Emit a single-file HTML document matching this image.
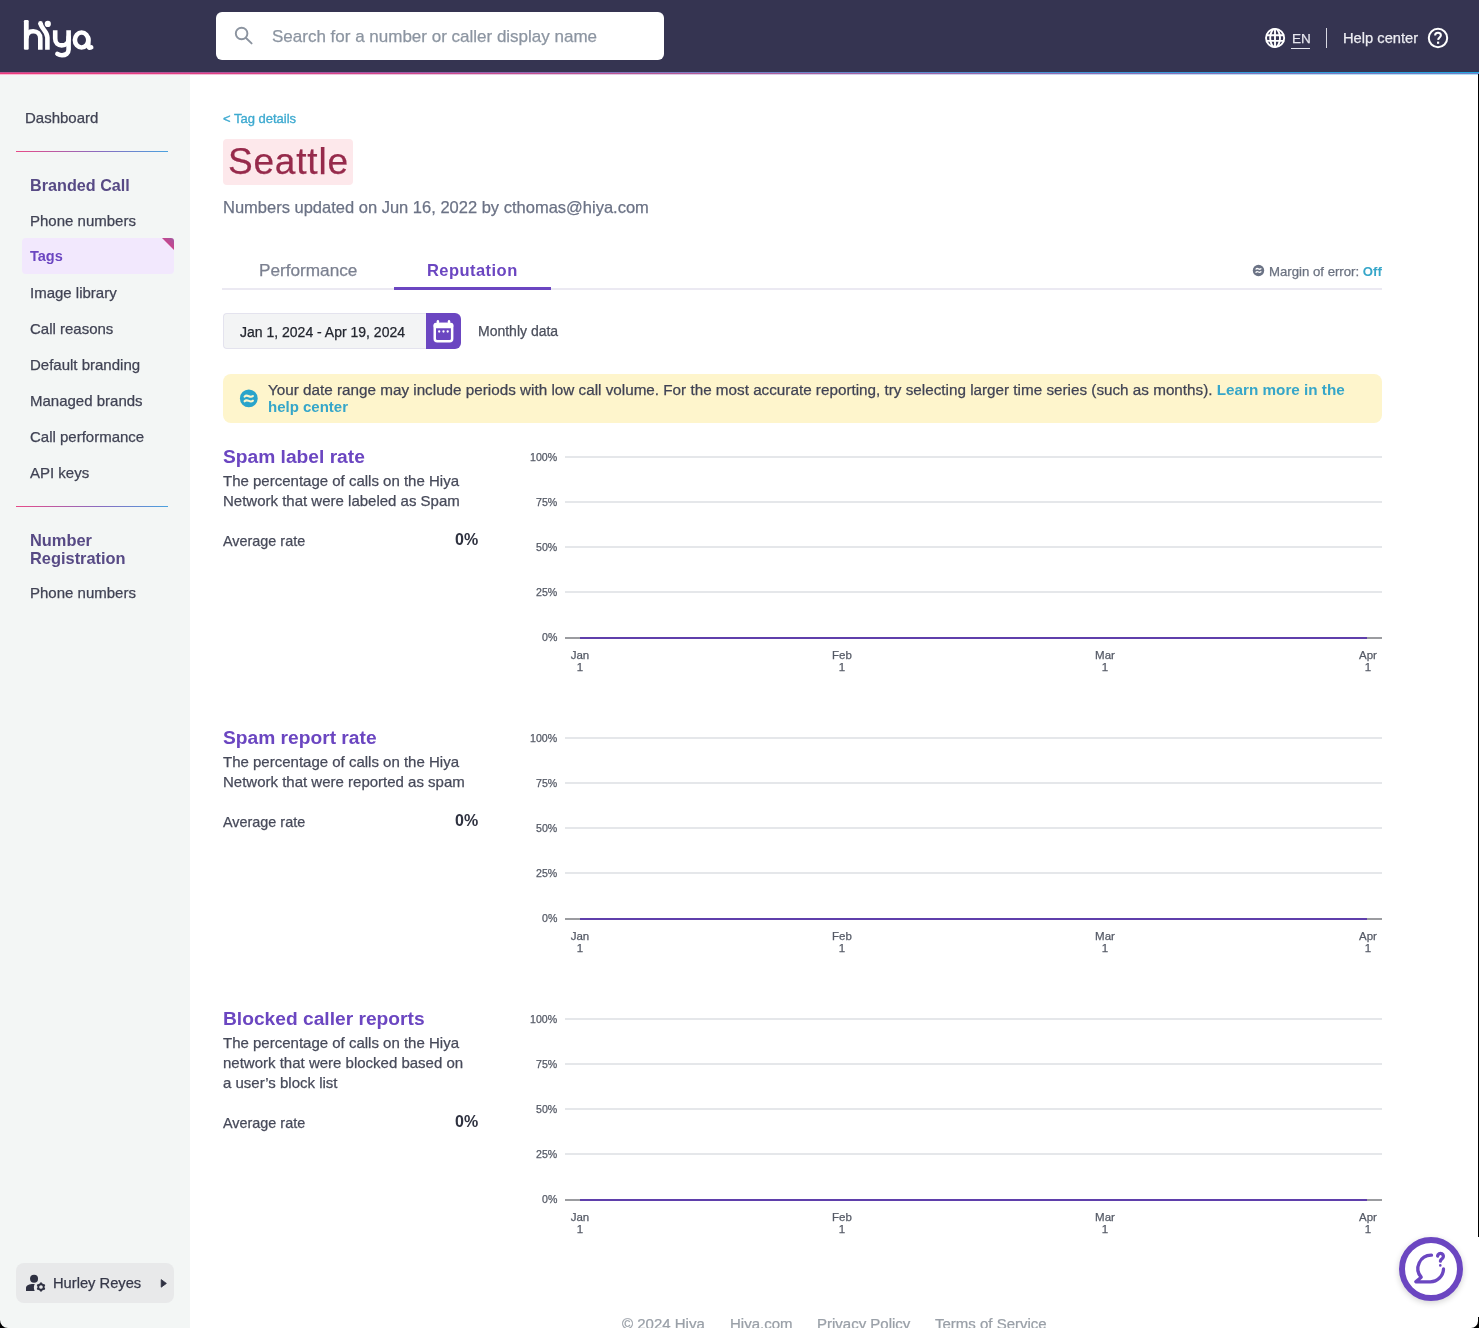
<!DOCTYPE html>
<html><head><meta charset="utf-8"><style>
html,body{margin:0;padding:0;width:1479px;height:1328px;overflow:hidden;background:#fff;}
body{position:relative;font-family:"Liberation Sans",sans-serif;}
.t{position:absolute;white-space:nowrap;will-change:transform;}
.r{position:absolute;display:block;}
</style></head><body>
<div class="r" style="left:0px;top:0px;width:1479px;height:72px;background:#353451;"></div>
<div class="r" style="left:0px;top:72px;width:1479px;height:1px;background:linear-gradient(90deg,#c4508e 0%,#a05aa6 25%,#7a7ec2 47%,#3b98d8 75%,#22a6e0 100%);"></div>
<div class="r" style="left:0px;top:73px;width:1479px;height:1px;background:linear-gradient(90deg,#f03a7c 0%,#d8458a 25%,#b55a98 47%,#8c6eb8 75%,#6f80c8 100%);"></div>
<div class="r" style="left:0px;top:74px;width:1479px;height:1px;background:linear-gradient(90deg,#f03a7c 0%,#c4508e 20%,#7a7ec2 60%,#22a6e0 100%);opacity:0.35;"></div>
<svg class="r" style="left:16px;top:12px" width="84" height="52" viewBox="16 12 84 52" fill="none" stroke="#fff" stroke-width="4.6" stroke-linejoin="round">
<rect x="23.9" y="20" width="4.8" height="29.8" rx="1.2" fill="#fff" stroke="none"/>
<path d="M26.4 38.5 C26.6 33.4 29.4 31.2 33.2 31.2 C37.4 31.2 40.3 33.8 40.3 38.6 V49.8"/>
<path d="M40.5 23.2 C40.9 28.8 47.4 31 47.4 37.5 V49.8" stroke-linecap="butt"/>
<circle cx="40.5" cy="23.2" r="2.3" fill="#fff" stroke="none"/>
<circle cx="47.8" cy="23.9" r="3.1" fill="#fff" stroke="none"/>
<path d="M55.2 30.2 V38.4 C55.2 43 58 45.4 61.8 45.4 C65.6 45.4 68.6 43 68.6 38.4 V30.2"/>
<path d="M68.6 37 V49.6 C68.6 53.4 65.6 55.2 62 55.2 C60.2 55.2 58.6 54.6 57.4 53.8" stroke-linecap="round"/>
<ellipse cx="81.6" cy="40" rx="6.7" ry="7.5"/>
<path d="M88.3 38 V45.8 C88.3 47.4 89.3 48 91.2 47.4" stroke-linecap="round"/>
</svg>
<div class="r" style="left:216px;top:12px;width:448px;height:48px;background:#fff;border-radius:6px;"></div>
<svg class="r" style="left:230px;top:22px" width="26" height="26" viewBox="230 22 26 26" fill="none" stroke="#8b939f" stroke-width="1.9" stroke-linecap="round">
<circle cx="241.6" cy="33.5" r="5.8"/><path d="M246 38 L251.6 43.4"/></svg>
<div class="t" style="top:27.51px;font-size:17px;line-height:17px;color:#8c95a1;-webkit-text-stroke:0.25px #8c95a1;left:272.00px;">Search for a number or caller display name</div>
<svg class="r" style="left:1264px;top:27px" width="22" height="22" viewBox="0 0 22 22" fill="none" stroke="#fff" stroke-width="1.9">
<circle cx="11.1" cy="11" r="9.1"/><ellipse cx="11.1" cy="11" rx="4.9" ry="9.1"/><path d="M11 1.9 V20.1 M2 8.2 H20.2 M2 13.9 H20.2"/></svg>
<div class="t" style="top:31.57px;font-size:13.5px;line-height:13.5px;color:#e6e6ee;-webkit-text-stroke:0.25px #e6e6ee;left:1291.50px;">EN</div>
<div class="r" style="left:1291px;top:48px;width:19px;height:1px;background:#e6e6ee;"></div>
<div class="r" style="left:1326px;top:28px;width:1px;height:20px;background:#d8d8e2;"></div>
<div class="t" style="top:30.56px;font-size:14.7px;line-height:14.7px;color:#ececf2;-webkit-text-stroke:0.25px #ececf2;left:1342.80px;">Help center</div>
<svg class="r" style="left:1427px;top:27px" width="22" height="22" viewBox="0 0 22 22" fill="none" stroke="#fff" stroke-width="2" stroke-linecap="round">
<circle cx="11" cy="11" r="9.2"/><path d="M8.1 8.4 C8.1 6.7 9.4 5.7 11 5.7 C12.7 5.7 13.9 6.8 13.9 8.3 C13.9 10.3 11.2 10.6 11.1 12.9" stroke-linecap="butt"/><rect x="10" y="14.6" width="2.2" height="2.2" fill="#fff" stroke="none"/></svg>
<div class="r" style="left:0px;top:75px;width:190px;height:1253px;background:#f3f6f5;"></div>
<div class="t" style="top:109.70px;font-size:15px;line-height:15px;color:#404354;-webkit-text-stroke:0.25px #404354;left:24.50px;">Dashboard</div>
<div class="r" style="left:16px;top:151px;width:152px;height:1px;background:linear-gradient(90deg,#e84a88,#8a6cc0 55%,#4aa2df);"></div>
<div class="t" style="top:176.89px;font-size:16.2px;line-height:16.2px;color:#574a85;font-weight:700;left:30.40px;">Branded Call</div>
<div class="t" style="top:212.50px;font-size:15px;line-height:15px;color:#404354;-webkit-text-stroke:0.25px #404354;left:30.40px;">Phone numbers</div>
<div class="r" style="left:22px;top:238px;width:152px;height:36px;background:#f2e8fd;border-radius:4px;overflow:hidden;"></div>
<svg class="r" style="left:162px;top:238px" width="12" height="12" viewBox="0 0 12 12"><defs><linearGradient id="tg" x1="1" y1="0" x2="0.3" y2="0.8"><stop offset="0" stop-color="#a05aa2"/><stop offset="1" stop-color="#dc3a80"/></linearGradient></defs><path d="M0 0 H9 Q12 0 12 3 V12 Z" fill="url(#tg)"/></svg>
<div class="t" style="top:248.93px;font-size:14.5px;line-height:14.5px;color:#6b46c1;font-weight:700;left:30.40px;">Tags</div>
<div class="t" style="top:284.50px;font-size:15px;line-height:15px;color:#404354;-webkit-text-stroke:0.25px #404354;left:30.40px;">Image library</div>
<div class="t" style="top:320.50px;font-size:15px;line-height:15px;color:#404354;-webkit-text-stroke:0.25px #404354;left:30.40px;">Call reasons</div>
<div class="t" style="top:356.50px;font-size:15px;line-height:15px;color:#404354;-webkit-text-stroke:0.25px #404354;left:30.40px;">Default branding</div>
<div class="t" style="top:392.50px;font-size:15px;line-height:15px;color:#404354;-webkit-text-stroke:0.25px #404354;left:30.40px;">Managed brands</div>
<div class="t" style="top:428.50px;font-size:15px;line-height:15px;color:#404354;-webkit-text-stroke:0.25px #404354;left:30.40px;">Call performance</div>
<div class="t" style="top:464.50px;font-size:15px;line-height:15px;color:#404354;-webkit-text-stroke:0.25px #404354;left:30.40px;">API keys</div>
<div class="r" style="left:16px;top:506px;width:152px;height:1px;background:linear-gradient(90deg,#e84a88,#8a6cc0 55%,#4aa2df);"></div>
<div class="t" style="top:531.92px;font-size:16.4px;line-height:16.4px;color:#574a85;font-weight:700;left:30.40px;">Number</div>
<div class="t" style="top:549.92px;font-size:16.4px;line-height:16.4px;color:#574a85;font-weight:700;left:30.40px;">Registration</div>
<div class="t" style="top:585.30px;font-size:15px;line-height:15px;color:#404354;-webkit-text-stroke:0.25px #404354;left:30.40px;">Phone numbers</div>
<div class="r" style="left:16px;top:1263px;width:158px;height:40px;background:#e8e9ea;border-radius:8px;"></div>
<svg class="r" style="left:25px;top:1274px" width="22" height="20" viewBox="0 0 22 20" fill="#2f3142">
<circle cx="9.05" cy="4.85" r="4"/><path d="M1 16.9 V14 C1 11.6 4.3 10.1 8.5 10.1 H9.7 C8.6 12.2 8.6 14.9 9.7 16.9 Z"/>
<g transform="translate(16,13)"><circle r="2.75" fill="none" stroke="#2f3142" stroke-width="1.8"/>
<g stroke="#2f3142" stroke-width="1.9" stroke-linecap="round"><path d="M0 -3 V-3.7"/><path d="M0 3 V3.7"/><path d="M2.6 -1.5 L3.2 -1.85"/><path d="M-2.6 -1.5 L-3.2 -1.85"/><path d="M2.6 1.5 L3.2 1.85"/><path d="M-2.6 1.5 L-3.2 1.85"/></g></g></svg>
<div class="t" style="top:1275.96px;font-size:14.7px;line-height:14.7px;color:#363849;-webkit-text-stroke:0.25px #363849;left:52.80px;">Hurley Reyes</div>
<svg class="r" style="left:160px;top:1279px" width="8" height="9" viewBox="0 0 8 9"><path d="M1.2 0.6 L6.4 4.4 L1.2 8.2 Z" fill="#2f3142" stroke="#2f3142" stroke-width="0.8" stroke-linejoin="round"/></svg>
<div class="r" style="left:1478px;top:74px;width:1px;height:1163px;background:#000;"></div>
<div class="r" style="left:1478px;top:1317px;width:1px;height:11px;background:#000;"></div>
<svg class="r" style="left:1463px;top:1313px" width="16" height="15" viewBox="1463 1313 16 15"><path d="M1478 1321 A7 7 0 0 1 1471 1328 H1479 V1321 Z" fill="#000"/></svg>
<svg class="r" style="left:0px;top:1313px" width="16" height="15" viewBox="0 1313 16 15"><path d="M0 1320 A8 8 0 0 0 8 1328 H0 Z" fill="#000"/></svg>
<div class="t" style="top:112.40px;font-size:13px;line-height:13px;color:#3eaad0;-webkit-text-stroke:0.25px #3eaad0;left:222.60px;-webkit-text-stroke:0.35px #3eaad0;">&lt; Tag details</div>
<div class="r" style="left:222.6px;top:138.9px;width:130px;height:46.3px;background:#fde8eb;border-radius:4px;"></div>
<div class="t" style="top:143.48px;font-size:37px;line-height:37px;color:#962a4b;letter-spacing:0.8px;-webkit-text-stroke:0.25px #962a4b;left:227.50px;">Seattle</div>
<div class="t" style="top:198.63px;font-size:16.5px;line-height:16.5px;color:#6b7285;-webkit-text-stroke:0.25px #6b7285;left:222.60px;">Numbers updated on Jun 16, 2022 by cthomas@hiya.com</div>
<div class="r" style="left:222px;top:288px;width:1160px;height:2px;background:#ebe9f2;"></div>
<div class="t" style="top:261.64px;font-size:17.2px;line-height:17.2px;color:#7b8090;-webkit-text-stroke:0.25px #7b8090;left:259.20px;">Performance</div>
<div class="t" style="top:261.73px;font-size:16.5px;line-height:16.5px;color:#6b46c1;font-weight:700;letter-spacing:0.45px;left:426.50px;">Reputation</div>
<div class="r" style="left:394.4px;top:287px;width:157px;height:3px;background:#6b46c1;"></div>
<svg class="r" style="left:1252px;top:264px" width="13" height="13" viewBox="0 0 13 13"><circle cx="6.5" cy="6.5" r="5.7" fill="#6b7385"/><path d="M4 5.1 C4.7 4.3 5.5 4.4 6.4 4.9 C7.3 5.4 8.1 5.4 8.9 4.7 M4 8.2 C4.7 7.4 5.5 7.5 6.4 8 C7.3 8.5 8.1 8.5 8.9 7.8" fill="none" stroke="#fff" stroke-width="1.3" stroke-linecap="round"/></svg>
<div class="t" style="top:264.73px;font-size:13.2px;line-height:13.2px;color:#6b7280;-webkit-text-stroke:0.25px #6b7280;right:97.00px;">Margin of error: <b style="color:#36a6c9;-webkit-text-stroke:0">Off</b></div>
<div class="r" style="left:222.6px;top:312.7px;width:203.2px;height:36.5px;background:#f3f4f5;border:1px solid #e4e3ee;border-right:none;border-radius:4px 0 0 4px;box-sizing:border-box;"></div>
<div class="t" style="top:325.15px;font-size:14px;line-height:14px;color:#23262f;-webkit-text-stroke:0.25px #23262f;left:239.60px;">Jan 1, 2024 - Apr 19, 2024</div>
<div class="r" style="left:425.6px;top:313.2px;width:35.9px;height:36px;background:#6b46c1;border-radius:0 6px 6px 0;"></div>
<svg class="r" style="left:433px;top:319px" width="22" height="24" viewBox="0 0 22 24" fill="#fff">
<rect x="1.75" y="4.95" width="17.4" height="17.4" rx="2.5" fill="none" stroke="#fff" stroke-width="2.5"/><rect x="0.5" y="3.7" width="19.9" height="5.6" rx="2.5"/><rect x="3.7" y="1" width="2.4" height="4" rx="1.2"/><rect x="14.8" y="1" width="2.4" height="4" rx="1.2"/>
<circle cx="6.2" cy="12.5" r="1.15"/><circle cx="10.5" cy="12.5" r="1.15"/><circle cx="14.7" cy="12.5" r="1.15"/></svg>
<div class="t" style="top:324.45px;font-size:14px;line-height:14px;color:#4b4f5c;-webkit-text-stroke:0.25px #4b4f5c;left:477.90px;">Monthly data</div>
<div class="r" style="left:222.8px;top:374px;width:1159.6px;height:49.4px;background:#fef5cc;border-radius:8px;"></div>
<svg class="r" style="left:239px;top:389px" width="20" height="20" viewBox="0 0 20 20"><circle cx="9.8" cy="9.4" r="8.9" fill="#29a4cb"/><path d="M5.6 7.6 C6.8 6.2 8.2 6.4 9.8 7.2 C11.4 8 12.8 8 13.9 7 M5.6 12.3 C6.8 10.9 8.2 11.1 9.8 11.9 C11.4 12.7 12.8 12.7 13.9 11.7" fill="none" stroke="#fef5cc" stroke-width="2.1" stroke-linecap="round"/></svg>
<div class="t" style="top:382.19px;font-size:15.25px;line-height:15.25px;color:#404354;-webkit-text-stroke:0.25px #404354;left:267.80px;">Your date range may include periods with low call volume. For the most accurate reporting, try selecting larger time series (such as months). <b style="color:#36a6c9;-webkit-text-stroke:0">Learn more in the</b></div>
<div class="t" style="top:399.20px;font-size:15px;line-height:15px;color:#404354;-webkit-text-stroke:0.25px #404354;left:267.80px;"><b style="color:#36a6c9;-webkit-text-stroke:0">help center</b></div>
<div class="t" style="top:447.35px;font-size:19.2px;line-height:19.2px;color:#6b46c1;font-weight:700;left:223.00px;">Spam label rate</div>
<div class="t" style="top:473.00px;font-size:15px;line-height:15px;color:#474a5a;-webkit-text-stroke:0.25px #474a5a;left:223.00px;">The percentage of calls on the Hiya</div>
<div class="t" style="top:493.00px;font-size:15px;line-height:15px;color:#474a5a;-webkit-text-stroke:0.25px #474a5a;left:223.00px;">Network that were labeled as Spam</div>
<div class="t" style="top:533.71px;font-size:14.4px;line-height:14.4px;color:#474a5a;-webkit-text-stroke:0.25px #474a5a;left:223.00px;">Average rate</div>
<div class="t" style="top:532.36px;font-size:16px;line-height:16px;color:#2f3240;font-weight:700;right:1001.00px;">0%</div>
<div class="r" style="left:565px;top:455.6px;width:817px;height:2px;background:#e5e7ea;"></div>
<div class="t" style="top:451.53px;font-size:10.6px;line-height:10.6px;color:#555a66;-webkit-text-stroke:0.25px #555a66;right:922.00px;">100%</div>
<div class="r" style="left:565px;top:500.8px;width:817px;height:2px;background:#e5e7ea;"></div>
<div class="t" style="top:496.70px;font-size:10.6px;line-height:10.6px;color:#555a66;-webkit-text-stroke:0.25px #555a66;right:922.00px;">75%</div>
<div class="r" style="left:565px;top:545.9px;width:817px;height:2px;background:#e5e7ea;"></div>
<div class="t" style="top:541.87px;font-size:10.6px;line-height:10.6px;color:#555a66;-webkit-text-stroke:0.25px #555a66;right:922.00px;">50%</div>
<div class="r" style="left:565px;top:591.1px;width:817px;height:2px;background:#e5e7ea;"></div>
<div class="t" style="top:587.04px;font-size:10.6px;line-height:10.6px;color:#555a66;-webkit-text-stroke:0.25px #555a66;right:922.00px;">25%</div>
<div class="t" style="top:632.21px;font-size:10.6px;line-height:10.6px;color:#555a66;-webkit-text-stroke:0.25px #555a66;right:922.00px;">0%</div>
<div class="r" style="left:565px;top:636.5px;width:817px;height:2px;background:#9b9ca0;"></div>
<div class="r" style="left:579.9px;top:636.5px;width:787.1px;height:2px;background:#5f3fab;"></div>
<div class="t" style="top:649.57px;font-size:11.5px;line-height:11.5px;color:#555a66;-webkit-text-stroke:0.25px #555a66;left:379.50px;width:400px;text-align:center;">Jan</div>
<div class="t" style="top:662.17px;font-size:11.5px;line-height:11.5px;color:#555a66;-webkit-text-stroke:0.25px #555a66;left:379.50px;width:400px;text-align:center;">1</div>
<div class="t" style="top:649.57px;font-size:11.5px;line-height:11.5px;color:#555a66;-webkit-text-stroke:0.25px #555a66;left:642.30px;width:400px;text-align:center;">Feb</div>
<div class="t" style="top:662.17px;font-size:11.5px;line-height:11.5px;color:#555a66;-webkit-text-stroke:0.25px #555a66;left:642.30px;width:400px;text-align:center;">1</div>
<div class="t" style="top:649.57px;font-size:11.5px;line-height:11.5px;color:#555a66;-webkit-text-stroke:0.25px #555a66;left:904.90px;width:400px;text-align:center;">Mar</div>
<div class="t" style="top:662.17px;font-size:11.5px;line-height:11.5px;color:#555a66;-webkit-text-stroke:0.25px #555a66;left:904.90px;width:400px;text-align:center;">1</div>
<div class="t" style="top:649.57px;font-size:11.5px;line-height:11.5px;color:#555a66;-webkit-text-stroke:0.25px #555a66;left:1167.60px;width:400px;text-align:center;">Apr</div>
<div class="t" style="top:662.17px;font-size:11.5px;line-height:11.5px;color:#555a66;-webkit-text-stroke:0.25px #555a66;left:1167.60px;width:400px;text-align:center;">1</div>
<div class="t" style="top:728.35px;font-size:19.2px;line-height:19.2px;color:#6b46c1;font-weight:700;left:223.00px;">Spam report rate</div>
<div class="t" style="top:754.00px;font-size:15px;line-height:15px;color:#474a5a;-webkit-text-stroke:0.25px #474a5a;left:223.00px;">The percentage of calls on the Hiya</div>
<div class="t" style="top:774.00px;font-size:15px;line-height:15px;color:#474a5a;-webkit-text-stroke:0.25px #474a5a;left:223.00px;">Network that were reported as spam</div>
<div class="t" style="top:814.71px;font-size:14.4px;line-height:14.4px;color:#474a5a;-webkit-text-stroke:0.25px #474a5a;left:223.00px;">Average rate</div>
<div class="t" style="top:813.36px;font-size:16px;line-height:16px;color:#2f3240;font-weight:700;right:1001.00px;">0%</div>
<div class="r" style="left:565px;top:736.6px;width:817px;height:2px;background:#e5e7ea;"></div>
<div class="t" style="top:732.53px;font-size:10.6px;line-height:10.6px;color:#555a66;-webkit-text-stroke:0.25px #555a66;right:922.00px;">100%</div>
<div class="r" style="left:565px;top:781.8px;width:817px;height:2px;background:#e5e7ea;"></div>
<div class="t" style="top:777.70px;font-size:10.6px;line-height:10.6px;color:#555a66;-webkit-text-stroke:0.25px #555a66;right:922.00px;">75%</div>
<div class="r" style="left:565px;top:826.9px;width:817px;height:2px;background:#e5e7ea;"></div>
<div class="t" style="top:822.87px;font-size:10.6px;line-height:10.6px;color:#555a66;-webkit-text-stroke:0.25px #555a66;right:922.00px;">50%</div>
<div class="r" style="left:565px;top:872.1px;width:817px;height:2px;background:#e5e7ea;"></div>
<div class="t" style="top:868.04px;font-size:10.6px;line-height:10.6px;color:#555a66;-webkit-text-stroke:0.25px #555a66;right:922.00px;">25%</div>
<div class="t" style="top:913.21px;font-size:10.6px;line-height:10.6px;color:#555a66;-webkit-text-stroke:0.25px #555a66;right:922.00px;">0%</div>
<div class="r" style="left:565px;top:917.5px;width:817px;height:2px;background:#9b9ca0;"></div>
<div class="r" style="left:579.9px;top:917.5px;width:787.1px;height:2px;background:#5f3fab;"></div>
<div class="t" style="top:930.57px;font-size:11.5px;line-height:11.5px;color:#555a66;-webkit-text-stroke:0.25px #555a66;left:379.50px;width:400px;text-align:center;">Jan</div>
<div class="t" style="top:943.17px;font-size:11.5px;line-height:11.5px;color:#555a66;-webkit-text-stroke:0.25px #555a66;left:379.50px;width:400px;text-align:center;">1</div>
<div class="t" style="top:930.57px;font-size:11.5px;line-height:11.5px;color:#555a66;-webkit-text-stroke:0.25px #555a66;left:642.30px;width:400px;text-align:center;">Feb</div>
<div class="t" style="top:943.17px;font-size:11.5px;line-height:11.5px;color:#555a66;-webkit-text-stroke:0.25px #555a66;left:642.30px;width:400px;text-align:center;">1</div>
<div class="t" style="top:930.57px;font-size:11.5px;line-height:11.5px;color:#555a66;-webkit-text-stroke:0.25px #555a66;left:904.90px;width:400px;text-align:center;">Mar</div>
<div class="t" style="top:943.17px;font-size:11.5px;line-height:11.5px;color:#555a66;-webkit-text-stroke:0.25px #555a66;left:904.90px;width:400px;text-align:center;">1</div>
<div class="t" style="top:930.57px;font-size:11.5px;line-height:11.5px;color:#555a66;-webkit-text-stroke:0.25px #555a66;left:1167.60px;width:400px;text-align:center;">Apr</div>
<div class="t" style="top:943.17px;font-size:11.5px;line-height:11.5px;color:#555a66;-webkit-text-stroke:0.25px #555a66;left:1167.60px;width:400px;text-align:center;">1</div>
<div class="t" style="top:1009.35px;font-size:19.2px;line-height:19.2px;color:#6b46c1;font-weight:700;left:223.00px;">Blocked caller reports</div>
<div class="t" style="top:1035.00px;font-size:15px;line-height:15px;color:#474a5a;-webkit-text-stroke:0.25px #474a5a;left:223.00px;">The percentage of calls on the Hiya</div>
<div class="t" style="top:1055.00px;font-size:15px;line-height:15px;color:#474a5a;-webkit-text-stroke:0.25px #474a5a;left:223.00px;">network that were blocked based on</div>
<div class="t" style="top:1075.00px;font-size:15px;line-height:15px;color:#474a5a;-webkit-text-stroke:0.25px #474a5a;left:223.00px;">a user’s block list</div>
<div class="t" style="top:1115.71px;font-size:14.4px;line-height:14.4px;color:#474a5a;-webkit-text-stroke:0.25px #474a5a;left:223.00px;">Average rate</div>
<div class="t" style="top:1114.36px;font-size:16px;line-height:16px;color:#2f3240;font-weight:700;right:1001.00px;">0%</div>
<div class="r" style="left:565px;top:1017.6px;width:817px;height:2px;background:#e5e7ea;"></div>
<div class="t" style="top:1013.53px;font-size:10.6px;line-height:10.6px;color:#555a66;-webkit-text-stroke:0.25px #555a66;right:922.00px;">100%</div>
<div class="r" style="left:565px;top:1062.8px;width:817px;height:2px;background:#e5e7ea;"></div>
<div class="t" style="top:1058.70px;font-size:10.6px;line-height:10.6px;color:#555a66;-webkit-text-stroke:0.25px #555a66;right:922.00px;">75%</div>
<div class="r" style="left:565px;top:1107.9px;width:817px;height:2px;background:#e5e7ea;"></div>
<div class="t" style="top:1103.87px;font-size:10.6px;line-height:10.6px;color:#555a66;-webkit-text-stroke:0.25px #555a66;right:922.00px;">50%</div>
<div class="r" style="left:565px;top:1153.1px;width:817px;height:2px;background:#e5e7ea;"></div>
<div class="t" style="top:1149.04px;font-size:10.6px;line-height:10.6px;color:#555a66;-webkit-text-stroke:0.25px #555a66;right:922.00px;">25%</div>
<div class="t" style="top:1194.21px;font-size:10.6px;line-height:10.6px;color:#555a66;-webkit-text-stroke:0.25px #555a66;right:922.00px;">0%</div>
<div class="r" style="left:565px;top:1198.5px;width:817px;height:2px;background:#9b9ca0;"></div>
<div class="r" style="left:579.9px;top:1198.5px;width:787.1px;height:2px;background:#5f3fab;"></div>
<div class="t" style="top:1211.57px;font-size:11.5px;line-height:11.5px;color:#555a66;-webkit-text-stroke:0.25px #555a66;left:379.50px;width:400px;text-align:center;">Jan</div>
<div class="t" style="top:1224.17px;font-size:11.5px;line-height:11.5px;color:#555a66;-webkit-text-stroke:0.25px #555a66;left:379.50px;width:400px;text-align:center;">1</div>
<div class="t" style="top:1211.57px;font-size:11.5px;line-height:11.5px;color:#555a66;-webkit-text-stroke:0.25px #555a66;left:642.30px;width:400px;text-align:center;">Feb</div>
<div class="t" style="top:1224.17px;font-size:11.5px;line-height:11.5px;color:#555a66;-webkit-text-stroke:0.25px #555a66;left:642.30px;width:400px;text-align:center;">1</div>
<div class="t" style="top:1211.57px;font-size:11.5px;line-height:11.5px;color:#555a66;-webkit-text-stroke:0.25px #555a66;left:904.90px;width:400px;text-align:center;">Mar</div>
<div class="t" style="top:1224.17px;font-size:11.5px;line-height:11.5px;color:#555a66;-webkit-text-stroke:0.25px #555a66;left:904.90px;width:400px;text-align:center;">1</div>
<div class="t" style="top:1211.57px;font-size:11.5px;line-height:11.5px;color:#555a66;-webkit-text-stroke:0.25px #555a66;left:1167.60px;width:400px;text-align:center;">Apr</div>
<div class="t" style="top:1224.17px;font-size:11.5px;line-height:11.5px;color:#555a66;-webkit-text-stroke:0.25px #555a66;left:1167.60px;width:400px;text-align:center;">1</div>
<div class="t" style="top:1316.30px;font-size:15px;line-height:15px;color:#9aa0a8;-webkit-text-stroke:0.25px #9aa0a8;left:622.00px;">© 2024 Hiya</div>
<div class="t" style="top:1316.30px;font-size:15px;line-height:15px;color:#9aa0a8;-webkit-text-stroke:0.25px #9aa0a8;left:730.00px;">Hiya.com</div>
<div class="t" style="top:1316.30px;font-size:15px;line-height:15px;color:#9aa0a8;-webkit-text-stroke:0.25px #9aa0a8;left:817.00px;">Privacy Policy</div>
<div class="t" style="top:1316.30px;font-size:15px;line-height:15px;color:#9aa0a8;-webkit-text-stroke:0.25px #9aa0a8;left:935.00px;">Terms of Service</div>
<div class="r" style="left:1399px;top:1237px;width:64px;height:64px;border-radius:50%;box-sizing:border-box;border:6px solid #6b46c1;background:#fff;box-shadow:0 2px 6px rgba(0,0,0,0.18);"></div>
<svg class="r" style="left:1412px;top:1250px" width="38" height="38" viewBox="0 0 38 38" fill="none" stroke="#6b46c1" stroke-width="3.3" stroke-linecap="round" stroke-linejoin="round">
<path d="M19.5 5.2 A13.3 13.3 0 0 0 9.2 27.2 L3.8 31.8 H18.3 A13.3 13.3 0 0 0 31.5 19"/>
<path d="M25.6 6 A2.9 2.9 0 1 1 30.2 8.6 C29.1 9.3 28.5 9.8 28.4 11.2"/><circle cx="28.3" cy="15.4" r="1.3" fill="#6b46c1" stroke="none"/></svg>
</body></html>
